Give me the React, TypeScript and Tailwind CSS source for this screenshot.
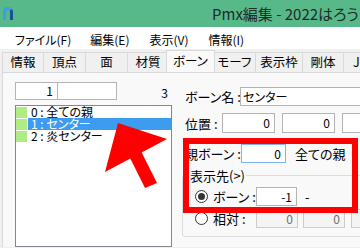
import React from 'react'

const tabs = [
  { label: '情報', cls: 'w-[41px]' },
  { label: '頂点', cls: 'w-[42px]' },
  { label: '面', cls: 'w-[42px]' },
  { label: '材質', cls: 'w-[41px]' },
  { label: 'ボーン', cls: 'w-[49px]', active: true },
  { label: 'モーフ', cls: 'w-[42px]' },
  { label: '表示枠', cls: 'w-[47px]' },
  { label: '剛体', cls: 'w-[41px]' },
  { label: 'Joint', cls: 'w-[50px]' },
]

const menus = [
  { label: 'ファイル(F)', cls: 'ml-[15px]' },
  { label: '編集(E)', cls: 'ml-[19px]' },
  { label: '表示(V)', cls: 'ml-[20px]' },
  { label: '情報(I)', cls: 'ml-[20px]' },
]

const bones = [
  { label: '0 : 全ての親' },
  { label: '1 : センター', selected: true },
  { label: '2 : 炎センター' },
]

const AppIcon = () => (
  <svg width="10" height="13" viewBox="0 0 10 13">
    <path d="M0 13V5Q0 0 5 0Q8 0 9 2L6.5 4Q6 3 5 3Q3 3 3 5.5V13Z" fill="#3a9fe6" />
    <path d="M9 2Q10 3.2 10 5V13H7V5.5Q7 4.5 6.5 4Z" fill="#1d4f96" />
  </svg>
)

const Input = ({ value, cls, focus, disabled }: { value?: string; cls: string; focus?: boolean; disabled?: boolean }) => (
  <div
    className={`${cls} shrink-0 border flex items-center justify-end pr-[4px] text-[12px] leading-none ${
      focus ? 'border-[#7eb4ea] bg-white text-black' : disabled ? 'border-[#cccccc] bg-[#f4f4f4] text-[#6d6d6d]' : 'border-[#b4b4b4] bg-white text-black'
    }`}
  >
    {value}
  </div>
)

const Radio = ({ checked }: { checked?: boolean }) => (
  <span className="shrink-0 w-[13px] h-[13px] rounded-full border border-[#333333] bg-white flex items-center justify-center">
    {checked && <span className="w-[7px] h-[7px] rounded-full bg-[#333333]" />}
  </span>
)

export default function App() {
  return (
    <div className="relative w-[360px] h-[248px] overflow-hidden bg-[#f0f0f0] text-black font-['Noto_Sans_CJK_JP','Noto_Sans',sans-serif] [font-feature-settings:'palt']">
      {/* title bar */}
      <div className="h-[27px] bg-[#57b98a] flex items-center whitespace-nowrap">
        <div className="ml-[3px] mt-[-1px]">
          <AppIcon />
        </div>
        <span className="ml-[199px] text-[15px] leading-none text-[#1f2a24]">Pmx編集 - 2022はろう</span>
      </div>

      {/* menu bar */}
      <div className="h-[22px] bg-white flex items-center pt-[4px] text-[12px] leading-none whitespace-nowrap">
        {menus.map((m) => (
          <span key={m.label} className={m.cls}>
            {m.label}
          </span>
        ))}
      </div>

      {/* tabs */}
      <div className="h-[23px] flex items-end pl-[2px] whitespace-nowrap text-[12.5px] leading-none overflow-hidden">
        {tabs.map((t, i) =>
          t.active ? (
            <div
              key={t.label}
              className={`${t.cls} shrink-0 relative z-10 -mx-[2px] mb-[-1px] h-[23px] bg-[#f9f9f9] border border-b-0 border-[#d9d9d9] flex items-center justify-center pb-[1px]`}
            >
              {t.label}
            </div>
          ) : (
            <div
              key={t.label}
              className={`${t.cls} shrink-0 h-[20px] bg-[#f0f0f0] border-t border-l border-[#d9d9d9] flex items-center justify-center ${
                i === tabs.length - 1 ? 'border-r' : ''
              }`}
            >
              {t.label}
            </div>
          )
        )}
      </div>

      {/* tab page */}
      <div className="ml-[2px] h-[175px] border-t border-l border-[#d9d9d9] bg-[#f9f9f9] flex">
        {/* left column */}
        <div className="ml-[12px] w-[157px] shrink-0 pt-[9px] flex flex-col">
          <div className="h-[18px] flex items-center">
            <Input value="1" cls="w-[43px] h-[18px]" />
            <Input cls="w-[60px] h-[18px] -ml-px" />
            <span className="ml-auto mr-[4px] mt-[4px] text-[12px] leading-none">3</span>
          </div>
          <div className="mt-[5px] flex-1 border border-[#828790] bg-white text-[12px] leading-[12px] whitespace-nowrap">
            {bones.map((b) => (
              <div key={b.label} className="h-[12px] flex items-center">
                <span className="w-[11px] h-[11px] bg-[#b0ec84] shrink-0" />
                <span
                  className={`h-[12px] flex-1 ml-px pl-[3px] flex items-center ${b.selected ? 'bg-[#3d9bf0] text-white' : ''}`}
                >
                  {b.label}
                </span>
              </div>
            ))}
          </div>
        </div>

        {/* right column */}
        <div className="ml-[10px] flex-1 min-w-0 pt-[14px] flex flex-col text-[13px] leading-none whitespace-nowrap">
          <div className="ml-[3px] h-[19px] flex items-center">
            <span className="w-[55px] shrink-0">ボーン名 :</span>
            <div className="w-[130px] shrink-0 h-[19px] border border-[#b4b4b4] bg-white flex items-center pl-[2px] text-[12px]">センター</div>
          </div>
          <div className="ml-[3px] mt-[7px] h-[20px] flex items-center gap-[7px]">
            <span className="w-[30px] shrink-0">位置 :</span>
            <Input value="0" cls="w-[53px] h-[20px]" />
            <Input value="0" cls="w-[53px] h-[20px]" />
            <Input value="0" cls="w-[53px] h-[20px]" />
          </div>
          <div className="ml-[3px] mt-[11px] h-[19px] flex items-center">
            <span className="w-[56px] shrink-0">親ボーン :</span>
            <Input value="0" cls="w-[45px] h-[19px]" focus />
            <span className="ml-[9px]">全ての親</span>
          </div>

          <fieldset className="mt-[6px] w-[200px] shrink-0 border border-[#dcdcdc] rounded-[3px] pl-[12px] pb-[8px]">
            <legend className="ml-[-6px] px-[1px] text-[13px] leading-[13px]">表示先(&gt;)</legend>
            <div className="mt-[5px] h-[19px] flex items-center">
              <Radio checked />
              <span className="ml-[5px] w-[43px] shrink-0">ボーン :</span>
              <Input value="-1" cls="w-[41px] h-[19px]" />
              <span className="ml-[8px]">-</span>
            </div>
            <div className="mt-[3px] h-[19px] flex items-center">
              <Radio />
              <span className="ml-[5px] w-[43px] shrink-0">相対 :</span>
              <Input value="0" cls="w-[42px] h-[19px]" disabled />
              <Input value="0" cls="w-[42px] h-[19px] ml-[5px]" disabled />
              <Input value="0" cls="w-[42px] h-[19px] ml-[6px]" disabled />
            </div>
          </fieldset>
        </div>
      </div>

      {/* annotations */}
      <div className="absolute left-[183px] top-[138px] w-[175px] h-[75px] border-[6px] border-[#ff0000]" />
      <svg className="absolute left-0 top-0 pointer-events-none" width="360" height="248" viewBox="0 0 360 248">
        <polygon points="118,123 167,139 141.7,152.5 157,183 145,188 130.3,158.5 105,172" fill="#ff0000" />
      </svg>
    </div>
  )
}
